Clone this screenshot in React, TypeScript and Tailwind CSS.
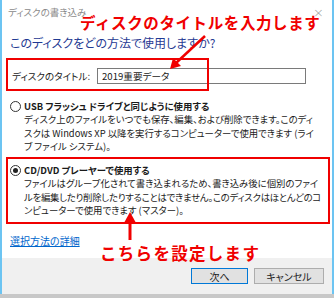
import React from "react";

const Radio = ({ checked }: { checked?: boolean }) => (
  <span className="w-[11px] h-[11px] rounded-full border border-[#333] bg-white flex items-center justify-center shrink-0">
    {checked && <span className="w-[5px] h-[5px] rounded-full bg-[#222]" />}
  </span>
);

export default function App() {
  return (
    <div className="w-[334px] h-[298px] bg-white relative overflow-hidden flex flex-col font-['Noto_Sans_CJK_JP',sans-serif] text-[#1a1a1a]">
      <div className="flex-1 flex flex-col border-x-2 border-[#6cc4f2] [font-feature-settings:'palt']">
        {/* title bar */}
        <div className="h-[24px] flex items-center pl-[6px] pr-[8px] text-[9.5px] text-[#8a8a8a]">
          <span>ディスクの書き込み</span>
          <span className="ml-auto text-[13px] leading-none text-[#9a9a9a] font-['DejaVu_Sans',sans-serif] font-light">×</span>
        </div>
        {/* heading */}
        <div className="mt-[9px] h-[20px] flex items-center pl-[8px] text-[12px] text-[#1f3a93]">
          このディスクをどの方法で使用しますか?
        </div>
        {/* title field */}
        <div className="mt-[15px] h-[16px] flex items-center pl-[10px] text-[9.6px]">
          <span className="w-[85px]">ディスクのタイトル:</span>
          <div className="w-[209px] h-[16px] border border-[#7a7a7a] flex items-center pl-[4px]">2019重要データ</div>
        </div>
        {/* option 1 */}
        <div className="mt-[15px] h-[14px] flex items-center pl-[8px] gap-[3px] text-[9.4px] font-bold">
          <Radio />
          <span>USB フラッシュ ドライブと同じように使用する</span>
        </div>
        <div className="pl-[22px] text-[9.4px] leading-[13.5px]">
          <div className="whitespace-nowrap">ディスク上のファイルをいつでも保存、編集、および削除できます。このディ</div>
          <div className="whitespace-nowrap">スクは Windows XP 以降を実行するコンピューターで使用できます (ライ</div>
          <div className="whitespace-nowrap">ブ ファイル システム)。</div>
        </div>
        {/* option 2 */}
        <div className="mt-[9.5px] h-[14px] flex items-center pl-[8px] gap-[3px] text-[9.4px] font-bold">
          <Radio checked />
          <span>CD/DVD プレーヤーで使用する</span>
        </div>
        <div className="pl-[22px] text-[9.4px] leading-[13.5px]">
          <div className="whitespace-nowrap">ファイルはグループ化されて書き込まれるため、書き込み後に個別のファイ</div>
          <div className="whitespace-nowrap tracking-[-0.25px]">ルを編集したり削除したりすることはできません。このディスクはほとんどのコ</div>
          <div className="whitespace-nowrap">ンピューターで使用できます (マスター)。</div>
        </div>
        {/* link */}
        <div className="mt-[15.5px] h-[14px] flex items-center pl-[8px] text-[10px] text-[#0066cc] underline">
          選択方法の詳細
        </div>
        {/* footer */}
        <div className="mt-auto h-[36px] bg-[#f0f0f0] flex items-start justify-end gap-[6px] pt-[10px] pr-[8px] text-[10px]">
          <button className="w-[57px] h-[16px] border border-[#0078d7] bg-[#e1e1e1] flex items-center justify-center">次へ</button>
          <button className="w-[70px] h-[16px] border border-[#adadad] bg-[#e1e1e1] flex items-center justify-center">キャンセル</button>
        </div>
      </div>
      <div className="h-[4px] bg-[#c8c8c8] shrink-0" />

      {/* annotations */}
      <div className="absolute left-[80px] top-[11px] text-[15.5px] tracking-[0.6px] font-bold text-[#f00000] leading-[22px] whitespace-nowrap">
        ディスクのタイトルを入力します
      </div>
      <div className="absolute left-[6px] top-[58px] w-[203px] h-[33px] border-2 border-[#f00000]" />
      <div className="absolute left-[6px] top-[157px] w-[324px] h-[67px] border-2 border-[#f00000]" />
      <div className="absolute left-[100px] top-[242px] text-[16.5px] tracking-[1.3px] font-bold text-[#f00000] leading-[22px] whitespace-nowrap">
        こちらを設定します
      </div>
      <svg className="absolute left-0 top-0" width="334" height="298" viewBox="0 0 334 298">
        <line x1="205" y1="36" x2="176" y2="63" stroke="#f00000" strokeWidth="2.5" />
        <polygon points="170,69 173,58 181,66" fill="#f00000" />
        <line x1="130" y1="240" x2="130" y2="221" stroke="#f00000" strokeWidth="3" />
        <polygon points="130,212 124.5,222 135.5,222" fill="#f00000" />
      </svg>
    </div>
  );
}
